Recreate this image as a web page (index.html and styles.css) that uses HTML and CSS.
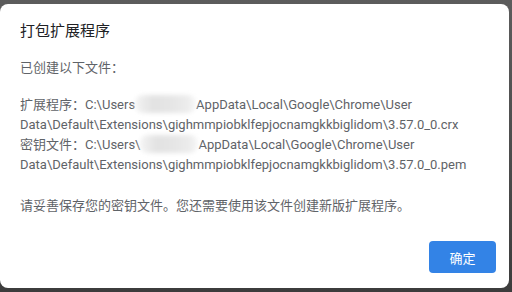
FILE: index.html
```html
<!DOCTYPE html>
<html lang="zh-CN">
<head>
<meta charset="utf-8">
<link rel="stylesheet" href="styles.css">
</head>
<body>
<div class="dialog">
  <div class="title">打包扩展程序</div>
  <div class="sub">已创建以下文件：</div>
  <div class="paths">
    <div class="path">扩展程序：C:\Users<span class="blur"></span>AppData\Local\Google\Chrome\User Data\Default\Extensions\gighmmpiobklfepjocnamgkkbiglidom\3.57.0_0.crx</div>
    <div class="path">密钥文件：C:\Users\<span class="blur blur2"></span>AppData\Local\Google\Chrome\User Data\Default\Extensions\gighmmpiobklfepjocnamgkkbiglidom\3.57.0_0.pem</div>
  </div>
  <div class="note">请妥善保存您的密钥文件。您还需要使用该文件创建新版扩展程序。</div>
  <div class="actions"><button class="ok">确定</button></div>
</div>
</body>
</html>
```
FILE: styles.css
```css
html, body {
  margin: 0;
  padding: 0;
}
body {
  width: 512px;
  height: 292px;
  overflow: hidden;
  background: linear-gradient(to bottom, #5c5c5c 0%, #4a4a4a 60%, #3c3c3c 100%);
  font-family: Roboto, "Noto Sans CJK SC", sans-serif;
  font-size: 13px;
  padding-top: 4px;
  box-sizing: border-box;
}
.dialog {
  width: 509px;
  height: 284px;
  box-sizing: border-box;
  background: #fff;
  border-radius: 8px;
  padding: 17px 20px 0 20px;
  color: #5f6368;
  line-height: 20px;
}
.title {
  font-size: 15px;
  color: #202124;
}
.sub {
  margin-top: 17px;
}
.paths {
  margin-top: 17px;
  width: 470px;
}
.blur {
  display: inline-block;
  width: 61px;
  height: 18px;
  vertical-align: -4px;
  background: linear-gradient(to right, #f4f4f4, #e2e2e2 30%, #e6e6e6 60%, #ececec 85%, #f7f7f7);
  filter: blur(2px);
  border-radius: 8px;
}
.blur2 {
  width: 58px;
}
.note {
  margin-top: 21px;
}
.actions {
  display: flex;
  justify-content: flex-end;
  margin-top: 25px;
  margin-right: -7px;
}
.ok {
  width: 67px;
  height: 32px;
  border: none;
  border-radius: 4px;
  background: #3383e6;
  color: #fff;
  font-family: Roboto, "Noto Sans CJK SC", sans-serif;
  font-size: 13px;
  padding: 0;
}
```
